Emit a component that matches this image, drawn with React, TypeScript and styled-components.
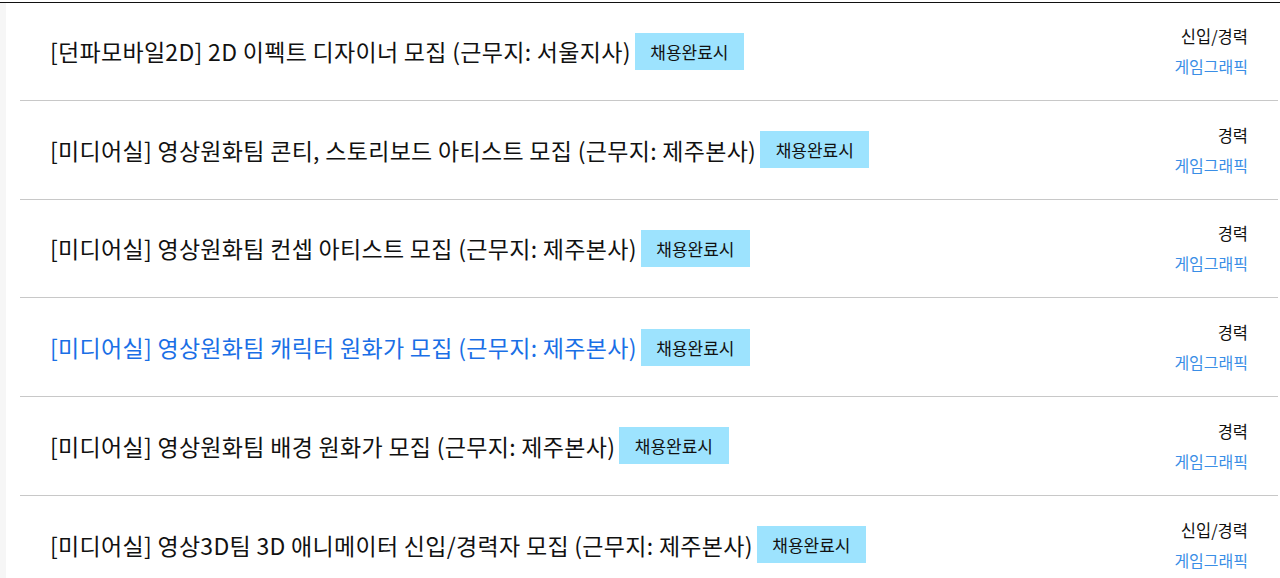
import React from 'react';
import { styled, createGlobalStyle } from 'styled-components';

const GlobalStyle = createGlobalStyle`
  * {
    box-sizing: border-box;
  }

  body {
    margin: 0;
    background: #ffffff;
    font-family: 'Noto Sans CJK KR', 'Noto Sans', sans-serif;
    color: #111111;
  }
`;

type Job = {
  title: string;
  career: string;
  part: string;
  active?: boolean;
};

const jobs: Job[] = [
  { title: '[던파모바일2D] 2D 이펙트 디자이너 모집 (근무지: 서울지사)', career: '신입/경력', part: '게임그래픽' },
  { title: '[미디어실] 영상원화팀 콘티, 스토리보드 아티스트 모집 (근무지: 제주본사)', career: '경력', part: '게임그래픽' },
  { title: '[미디어실] 영상원화팀 컨셉 아티스트 모집 (근무지: 제주본사)', career: '경력', part: '게임그래픽' },
  { title: '[미디어실] 영상원화팀 캐릭터 원화가 모집 (근무지: 제주본사)', career: '경력', part: '게임그래픽', active: true },
  { title: '[미디어실] 영상원화팀 배경 원화가 모집 (근무지: 제주본사)', career: '경력', part: '게임그래픽' },
  { title: '[미디어실] 영상3D팀 3D 애니메이터 신입/경력자 모집 (근무지: 제주본사)', career: '신입/경력', part: '게임그래픽' },
];

const App = () => {
  return (
    <>
      <GlobalStyle />
      <PageLayout>
        <SideStrip />
        <JobList>
          {jobs.map((job) => (
            <JobRow key={job.title}>
              <TitleBox>
                <JobTitle $active={job.active}>{job.title}</JobTitle>
                <StatusBadge>채용완료시</StatusBadge>
              </TitleBox>
              <MetaBox>
                <Career>{job.career}</Career>
                <Part>{job.part}</Part>
              </MetaBox>
            </JobRow>
          ))}
        </JobList>
      </PageLayout>
    </>
  );
};

export default App;

const PageLayout = styled.main`
  width: 100%;
  height: 578px;
  overflow: hidden;
  display: flex;
  border-top: 1px solid #111111;
  margin-top: 2px;
`;

const SideStrip = styled.aside`
  width: 6px;
  flex-shrink: 0;
  background: #f6f6f6;
`;

const JobList = styled.ul`
  flex: 1;
  margin: 0;
  padding: 0 2px 0 14px;
  list-style: none;
`;

const JobRow = styled.li`
  height: 98.75px;
  display: flex;
  align-items: center;
  justify-content: space-between;
  padding: 0 30px 0 30px;
  border-bottom: 1px solid #c8c8c8;

  &:first-child {
    height: 97.75px;
  }
`;

const TitleBox = styled.div`
  display: flex;
  align-items: center;
  gap: 4px;
`;

const JobTitle = styled.a<{ $active?: boolean }>`
  font-size: 23px;
  letter-spacing: 0.3px;
  color: ${({ $active }) => ($active ? '#1a6fe6' : '#111111')};
  cursor: pointer;
`;

const StatusBadge = styled.span`
  display: inline-flex;
  align-items: center;
  height: 37px;
  padding: 0 15.5px;
  background: #9de3fe;
  font-size: 17px;
  color: #111111;
`;

const MetaBox = styled.div`
  display: flex;
  flex-direction: column;
  align-items: flex-end;
  gap: 8px;
`;

const Career = styled.span`
  font-size: 16.5px;
  line-height: 22px;
  color: #111111;
`;

const Part = styled.span`
  font-size: 16px;
  line-height: 22px;
  color: #3a8ee6;
`;
